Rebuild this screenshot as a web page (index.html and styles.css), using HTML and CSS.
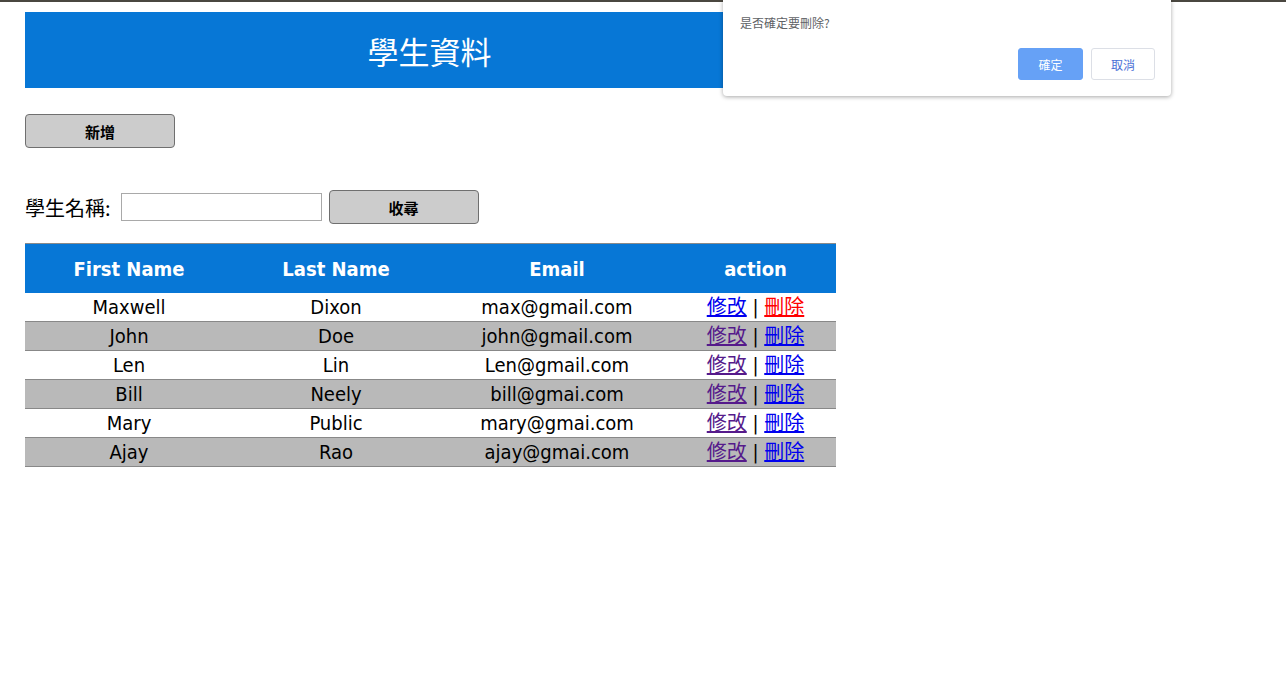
FILE: index.html
```html
<!DOCTYPE html>
<html lang="zh-Hant">
<head>
<meta charset="utf-8">
<title>學生資料</title>
<link rel="stylesheet" href="styles.css">
</head>
<body>
<div class="topbar"></div>
<main class="page">
  <header class="banner"><h1 class="banner-title">學生資料</h1></header>
  <div class="add-row"><button class="btn" type="button">新增</button></div>
  <form class="search-row">
    <label class="search-label" for="q">學生名稱:</label>
    <input class="search-input" id="q" type="text">
    <button class="btn" type="button">收尋</button>
  </form>
  <table class="grid">
    <colgroup>
      <col class="c1"><col class="c2"><col class="c3"><col class="c4">
    </colgroup>
    <thead>
      <tr><th>First Name</th><th>Last Name</th><th>Email</th><th>action</th></tr>
    </thead>
    <tbody>
      <tr><td>Maxwell</td><td>Dixon</td><td>max@gmail.com</td><td><a class="lnk" href="#">修改</a> | <a class="lnk del-active" href="#">刪除</a></td></tr>
      <tr><td>John</td><td>Doe</td><td>john@gmail.com</td><td><a class="lnk visited" href="#">修改</a> | <a class="lnk" href="#">刪除</a></td></tr>
      <tr><td>Len</td><td>Lin</td><td>Len@gmail.com</td><td><a class="lnk visited" href="#">修改</a> | <a class="lnk" href="#">刪除</a></td></tr>
      <tr><td>Bill</td><td>Neely</td><td>bill@gmai.com</td><td><a class="lnk visited" href="#">修改</a> | <a class="lnk" href="#">刪除</a></td></tr>
      <tr><td>Mary</td><td>Public</td><td>mary@gmai.com</td><td><a class="lnk visited" href="#">修改</a> | <a class="lnk" href="#">刪除</a></td></tr>
      <tr><td>Ajay</td><td>Rao</td><td>ajay@gmai.com</td><td><a class="lnk visited" href="#">修改</a> | <a class="lnk" href="#">刪除</a></td></tr>
    </tbody>
  </table>
</main>
<div class="dialog">
  <p class="dialog-msg">是否確定要刪除?</p>
  <div class="dialog-actions">
    <button class="dbtn dbtn-primary" type="button">確定</button>
    <button class="dbtn dbtn-plain" type="button">取消</button>
  </div>
</div>
</body>
</html>
```
FILE: styles.css
```css
html, body {
  margin: 0;
  padding: 0;
  background: #ffffff;
}
body {
  font-family: "DejaVu Sans Condensed", "DejaVu Sans", "Noto Sans CJK TC", sans-serif;
  color: #000;
}
.topbar {
  height: 2px;
  background: #4a4740;
}
.page {
  padding: 10px 25px 0 25px;
  display: flex;
  flex-direction: column;
  align-items: flex-start;
}
.banner {
  width: 811px;
  height: 76px;
  background: #0777d6;
  display: flex;
  align-items: center;
  justify-content: center;
}
.banner-title {
  margin: 0;
  font-family: "Noto Sans CJK TC", serif;
  font-weight: 400;
  font-size: 31px;
  line-height: 1;
  color: #ffffff;
  margin-right: 2px;
}
.add-row {
  margin-top: 26px;
}
.btn {
  width: 150px;
  height: 34px;
  background: #cccccc;
  border: 1px solid #6f6f6f;
  border-radius: 4px;
  font-family: "Noto Sans CJK TC", sans-serif;
  font-weight: 700;
  font-size: 15px;
  color: #000;
  padding: 0;
  margin: 0;
}
.search-row {
  margin: 42px 0 0 0;
  display: flex;
  align-items: center;
}
.search-label {
  font-family: "Noto Sans CJK TC", serif;
  font-size: 20px;
  margin-right: 10px;
  color: #000;
}
.search-input {
  box-sizing: border-box;
  width: 201px;
  height: 28px;
  border: 1px solid #a9a9a9;
  margin: 0 7px 0 0;
  padding: 0 4px;
}
.grid {
  margin-top: 19px;
  width: 811px;
  border-collapse: collapse;
  table-layout: fixed;
  font-size: 20px;
}
.c1 { width: 208px; }
.c2 { width: 206px; }
.c3 { width: 236px; }
.c4 { width: 161px; }
.grid th {
  background: #0777d6;
  color: #ffffff;
  font-weight: 700;
  height: 49px;
  padding: 0;
  border-top: 1px solid #8a8a8a;
  text-align: center;
}
.grid td {
  height: 28px;
  line-height: 28px;
  padding: 0;
  text-align: center;
  border-bottom: 1px solid #888888;
  white-space: nowrap;
}
.grid tbody tr:nth-child(even) td {
  background: #b9b9b9;
}
.lnk {
  font-family: "Noto Sans CJK TC", serif;
  line-height: 1;
  color: #0000ee;
  text-decoration: underline;
}
.lnk.visited { color: #551a8b; }
.lnk.del-active { color: #ff0000; }

.dialog {
  position: absolute;
  left: 723px;
  top: 0;
  width: 448px;
  height: 96px;
  box-sizing: border-box;
  background: #ffffff;
  border-radius: 0 0 4px 4px;
  box-shadow: 0 1px 4px rgba(0, 0, 0, 0.35);
  padding: 15px 16px 16px 17px;
  font-family: "Noto Sans CJK TC", sans-serif;
}
.dialog-msg {
  margin: 0;
  font-size: 12px;
  line-height: 16px;
  color: #606266;
}
.dialog-actions {
  margin-top: 17px;
  display: flex;
  justify-content: flex-end;
  gap: 8px;
}
.dbtn {
  height: 32px;
  border-radius: 3px;
  font-family: "Noto Sans CJK TC", sans-serif;
  font-size: 12px;
  padding: 0;
  margin: 0;
}
.dbtn-primary {
  width: 65px;
  background: #66a1f6;
  border: 1px solid #66a1f6;
  color: #ffffff;
}
.dbtn-plain {
  width: 64px;
  background: #ffffff;
  border: 1px solid #dcdfe6;
  color: #4b6fd6;
}
```
